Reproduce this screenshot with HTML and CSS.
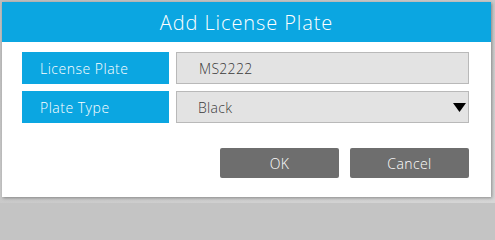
FILE: index.html
```html
<!DOCTYPE html>
<html>
<head>
<meta charset="utf-8">
<link rel="stylesheet" href="styles.css">
</head>
<body>
<div class="dialog">
  <div class="header">Add License Plate</div>
  <div class="form">
    <div class="row">
      <div class="label">License Plate</div>
      <div class="field">MS2222</div>
    </div>
    <div class="row">
      <div class="label">Plate Type</div>
      <div class="field select">
        <span>Black</span>
        <svg class="arrow" width="13" height="9" viewBox="0 0 13 9"><polygon points="0,0 13,0 6.5,9" fill="#000"/></svg>
      </div>
    </div>
  </div>
  <div class="actions">
    <button class="btn">OK</button>
    <button class="btn">Cancel</button>
  </div>
</div>
</body>
</html>
```
FILE: styles.css
```css
html, body {
  margin: 0;
  padding: 0;
  background: #c4c4c4;
}
body {
  width: 495px;
  height: 203px;
  background: linear-gradient(to bottom right, #bdbdbd, #d6d6d6);
  font-family: "Open Sans", "DejaVu Sans", sans-serif;
  font-weight: 300;
  overflow: hidden;
}
.dialog {
  margin: 2px 0 0 2px;
  width: 489px;
  height: 195px;
  background: #fff;
  box-shadow: 1px 1px 3px rgba(0,0,0,0.35);
  display: flex;
  flex-direction: column;
}
.header {
  height: 40px;
  background: #0ba6e1;
  color: #fff;
  font-size: 20px;
  display: flex;
  align-items: center;
  justify-content: center;
  letter-spacing: 0.9px;
}
.form {
  padding: 10px 22px 0 20px;
  display: flex;
  flex-direction: column;
  gap: 7px;
}
.row {
  display: flex;
  gap: 7px;
  height: 32px;
}
.label {
  width: 147px;
  background: #0ba6e1;
  color: #fff;
  font-size: 14px;
  letter-spacing: 0.5px;
  display: flex;
  align-items: center;
  padding-left: 18px;
  box-sizing: border-box;
}
.field {
  flex: 1;
  background: #e3e3e3;
  border: 1px solid #b9b9b9;
  box-sizing: border-box;
  color: #3a3a3a;
  font-size: 14px;
  letter-spacing: 0.3px;
  display: flex;
  align-items: center;
  padding-left: 22px;
}
.select {
  justify-content: space-between;
  padding-left: 21px;
  padding-right: 2px;
}
.arrow {
  display: block;
}
.actions {
  display: flex;
  justify-content: flex-end;
  gap: 11px;
  padding: 25px 22px 0 0;
}
.btn {
  width: 119px;
  height: 30px;
  background: #6e6e6e;
  border: none;
  border-radius: 2px;
  color: #fff;
  font-family: "Open Sans", "DejaVu Sans", sans-serif;
  font-weight: 300;
  font-size: 14px;
  letter-spacing: 0.4px;
  padding: 0;
}
```
